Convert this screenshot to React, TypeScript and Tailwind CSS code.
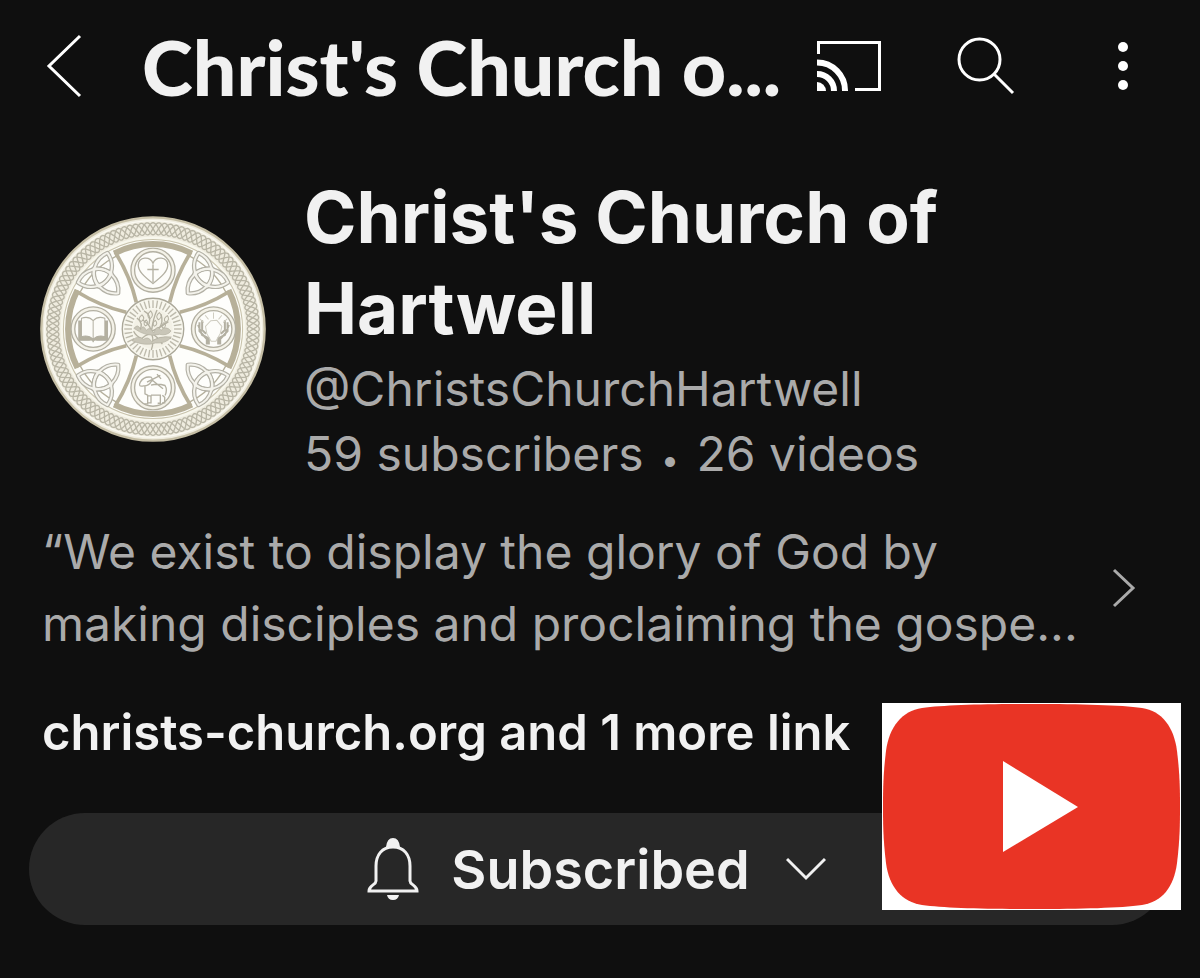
import React from "react";

const TAU = Math.PI * 2;

// One strand of the braided border, a sine wave wrapped around the emblem
const strand = (phase: number, waves: number) => {
  const points: string[] = [];
  for (let i = 0; i <= 720; i++) {
    const angle = (i / 720) * TAU;
    const radius = 300 + 18 * Math.sin(angle * waves + phase);
    points.push(
      `${(radius * Math.cos(angle)).toFixed(1)},${(radius * Math.sin(angle)).toFixed(1)}`
    );
  }
  return points.join(" ");
};

const strands = [0, TAU / 4, TAU / 2, (TAU * 3) / 4].map((p) => strand(p, 28));
const quarters = [0, 90, 180, 270];
const rays = Array.from({ length: 40 }, (_, i) => i * 9);

const knots = [
  { x: -155, y: -158, turn: 15 },
  { x: 155, y: -158, turn: -15 },
  { x: -155, y: 158, turn: 45 },
  { x: 155, y: 158, turn: -45 },
];

const Knot: React.FC<{ x: number; y: number; turn: number }> = ({ x, y, turn }) => {
  const lobes = [0, 120, 240].map((a) => (
    <path key={a} d="M0 -72A66 66 0 0 1 0 32A66 66 0 0 1 0 -72Z" transform={`rotate(${a})`} />
  ));

  return (
    <g transform={`translate(${x} ${y}) rotate(${turn})`} fill="none" strokeLinejoin="round">
      <g stroke="#b3b1a6" strokeWidth="13">{lobes}</g>
      <g stroke="#f4f3ec" strokeWidth="6">{lobes}</g>
    </g>
  );
};

const Medallion: React.FC<{ x: number; y: number; children: React.ReactNode }> = ({
  x,
  y,
  children,
}) => (
  <g transform={`translate(${x} ${y})`} fill="none" stroke="#b3b0a2" strokeWidth="3">
    <circle r="66" fill="#f4f2e8" strokeWidth="4" />
    <circle r="55" fill="#fdfdfa" strokeWidth="4" />
    {children}
  </g>
);

const Emblem: React.FC = () => (
  <svg viewBox="-338 -338 676 676" className="w-full" role="img" aria-label="Christ's Church of Hartwell">
    <circle r="334" fill="#efecdf" stroke="#c5bea5" strokeWidth="7" />
    <circle r="324" fill="none" stroke="#fbfaf3" strokeWidth="4" />
    <g fill="none" stroke="#b8b5a5" strokeWidth="4">
      {strands.map((points, i) => (
        <polyline key={i} points={points} />
      ))}
    </g>
    <circle r="272" fill="#fdfdf9" stroke="#f8f7ed" strokeWidth="10" />
    <circle r="268" fill="none" stroke="#c8c2ab" strokeWidth="3" />
    <circle r="244" fill="#fefefb" stroke="#b5b09d" strokeWidth="4" />

    {knots.map((knot) => (
      <Knot key={`${knot.x}${knot.y}`} {...knot} />
    ))}

    {quarters.map((a) => (
      <g key={a} transform={`rotate(${a})`} fill="none" stroke="#b7b099">
        <path d="M-113 -228Q-69 -157 -51 -80H51Q69 -157 113 -228A256 256 0 0 0 -113 -228Z" fill="#fefefc" stroke="none" />
        <path d="M-116 -226A254 254 0 0 1 116 -226" strokeWidth="18" />
        <path d="M-113 -230Q-68 -157 -50 -80M113 -230Q68 -157 50 -80" strokeWidth="11" />
      </g>
    ))}

    {/* Heart with cross */}
    <Medallion x={0} y={-176}>
      <path d="M0 40C-28 18 -45 2 -44 -16C-42 -40 -10 -43 0 -21C10 -43 42 -40 44 -16C45 2 28 18 0 40Z" strokeWidth="4" />
      <path d="M0 -17V36M-17 -2H17" strokeWidth="4" />
    </Medallion>

    {/* Open book */}
    <Medallion x={-179} y={0}>
      <path d="M-43 -24V34H-12Q0 30 0 40Q0 30 12 34H43V-24Z" fill="#b4b1a0" />
      <path d="M0 -25Q-14 -40 -35 -32V23Q-14 17 0 31Q14 17 35 23V-32Q14 -40 0 -25ZM0 -25V31" fill="#fcfcf8" />
    </Medallion>

    {/* Raised hands */}
    <Medallion x={181} y={0}>
      <path d="M-42 -20V6L-20 30V46M-46 -12L-34 18L-14 28V46M-34 -26V3L-22 14M42 -20V6L20 30V46M46 -12L34 18L14 28V46M34 -26V3L22 14" strokeWidth="6" />
      <path d="M-24 -8L-8 -25L10 -26L25 -8L20 14L7 37H-7L-20 14ZM0 -49V-31M-25 -41L-15 -29M25 -41L15 -29M-41 -30L-29 -19M41 -30L29 -19" stroke="#cfcdc1" />
    </Medallion>

    {/* Lamb */}
    <Medallion x={0} y={176}>
      <path d="M-28 -6Q-46 -2 -38 -17Q-28 -35 -6 -32Q2 -24 -6 -18Q-14 -5 -28 -6ZM-24 -4V18L-16 22V48H-26M-14 24H-6V45H-16M-6 22H22V46H14M28 22L35 28V45H27M-6 -8Q14 -14 36 -7Q44 6 36 23M-18 -17L22 -37M12 -41L24 -27M-2 -23L30 3" strokeWidth="4" />
    </Medallion>

    {/* Burning bush */}
    <circle r="92" fill="#f8f7ee" stroke="#aaa798" strokeWidth="4" />
    <g stroke="#bdbaac" strokeWidth="4">
      {rays.map((a) => (
        <path key={a} d="M0 -86V-63" transform={`rotate(${a})`} />
      ))}
    </g>
    <g fill="none" stroke="#b3b0a1" strokeWidth="4">
      <circle r="59" fill="#f3f1e6" stroke="none" />
      <path d="M-5 63Q4 35 -4 14Q-25 17 -38 34M-4 14Q13 22 28 45M-4 14Q-5 -12 -31 -27M-3 6Q21 -3 46 -22M-4 4Q0 -31 12 -57M-12 -14Q-4 -42 -27 -54M18 -2Q32 -20 24 -44M-32 30Q-51 22 -58 7M-40 4Q-27 -17 -48 -33M2 34Q30 20 54 28" />
      <path d="M-63 35Q-45 16 -28 31Q-14 20 -4 38Q17 20 55 24Q39 44 7 42Q-24 52 -63 35ZM-57 -2Q-45 -18 -37 2Q-30 -16 -20 4Q-9 -10 2 12Q12 -17 24 4Q38 -12 54 6Q43 21 19 16Q-19 26 -57 -2Z" fill="#c9c6b8" strokeWidth="2" />
      <path d="M-36 -22q-12 -9 3 -20q12 12 -3 20M-10 -30q-12 -11 3 -24q12 14 -3 24M16 -27q-11 -11 3 -22q13 11 -3 22M38 -20q-10 -11 5 -20q9 12 -5 20M-23 -9q-9 -10 3 -18q10 11 -3 18M4 -8q-9 -10 3 -18q10 11 -3 18M30 -2q-8 -9 3 -17q10 10 -3 17" strokeWidth="3" />
    </g>
  </svg>
);

const Header: React.FC = () => (
  <header className="flex h-[132px] items-center pr-[57px] pl-[46px] text-white">
    <button type="button" aria-label="Back" className="shrink-0">
      <svg viewBox="0 0 36 64" className="w-9" fill="none" stroke="currentColor" strokeWidth="3">
        <path d="M34 2L3 32L34 62" />
      </svg>
    </button>
    <p className="ml-[60px] flex-1 font-[Lato,sans-serif] text-[77px] leading-[100px] font-black whitespace-nowrap text-[#f1f1f1]">
      Christ&apos;s Church o...
    </p>
    <div className="flex shrink-0 items-center">
      <button type="button" aria-label="Cast" className="mr-[76px]">
        <svg viewBox="0 0 64 50" className="w-16" fill="none" stroke="currentColor">
          <path d="M1.5 13V1.5H62.5V48.5H38" strokeWidth="3" />
          <path d="M0 21.5A28 28 0 0 1 28 50M0 33A17 17 0 0 1 17 50" strokeWidth="6" />
          <path d="M0 41A9 9 0 0 1 9 50H0Z" fill="currentColor" stroke="none" />
        </svg>
      </button>
      <button type="button" aria-label="Search" className="mr-[88px]">
        <svg viewBox="0 0 58 58" className="w-[58px]" fill="none" stroke="currentColor" strokeWidth="3">
          <circle cx="22.5" cy="22.5" r="20.5" />
          <path d="M37 37L56 56" />
        </svg>
      </button>
      <button type="button" aria-label="More options">
        <svg viewBox="0 0 40 50" className="w-10" fill="currentColor">
          <circle cx="20" cy="6" r="5" />
          <circle cx="20" cy="25" r="5" />
          <circle cx="20" cy="44" r="5" />
        </svg>
      </button>
    </div>
  </header>
);

const Profile: React.FC = () => (
  <section className="flex items-center gap-[38px] pt-10 pr-10 pl-10">
    <div className="w-[226px] shrink-0">
      <Emblem />
    </div>
    <div className="whitespace-nowrap">
      <h1 className="text-[71px] leading-[91px] font-bold">
        Christ&apos;s Church of
        <br />
        Hartwell
      </h1>
      <div className="pt-[2px] text-[48px] leading-[65px] text-[#aaaaaa]">
        <p>@ChristsChurchHartwell</p>
        <p>
          59 subscribers <span className="mx-1 text-[32px] leading-none">•</span> 26 videos
        </p>
      </div>
    </div>
  </section>
);

const Description: React.FC = () => (
  <button
    type="button"
    className="mt-[30px] flex w-full items-center justify-between pr-16 pl-[42px] text-left text-[48px] leading-[72px] whitespace-nowrap text-[#aaaaaa]"
  >
    <span>
      “We exist to display the glory of God by
      <br />
      making disciples and proclaiming the gospe...
    </span>
    <svg viewBox="0 0 24 40" className="w-6 shrink-0" fill="none" stroke="currentColor" strokeWidth="3">
      <path d="M2 2L21 20L2 38" />
    </svg>
  </button>
);

const Actions: React.FC = () => (
  <section className="relative mt-[37px] pr-8 pl-[29px]">
    <a href="#links" className="ml-[13px] text-[49px] leading-[72px] font-semibold whitespace-nowrap">
      christs-church.org and 1 more link
    </a>
    <button
      type="button"
      className="mt-11 flex h-28 w-full items-center justify-center gap-8 rounded-full bg-[#272727] pr-1 text-[54px] font-semibold"
    >
      <svg viewBox="0 0 52 64" className="w-[52px]" fill="none" stroke="currentColor" strokeWidth="3">
        <path d="M26 10C15 10 9 18 9 29V44C9 48 2 48 2 54H50C50 48 43 48 43 44V29C43 18 37 10 26 10Z" />
        <path d="M19 10Q20 1 26 1Q32 1 33 10ZM20 58H32Q31 63 26 63Q21 63 20 58Z" fill="currentColor" stroke="none" />
      </svg>
      Subscribed
      <svg viewBox="0 0 40 24" className="ml-1 w-10" fill="none" stroke="currentColor" strokeWidth="3">
        <path d="M1 2L20 21L39 2" />
      </svg>
    </button>
    <svg viewBox="0 0 299 207" className="absolute right-[19px] bottom-[15px] w-[299px]" role="img" aria-label="YouTube">
      <path d="M0 0H299V207H0Z" fill="#fff" />
      <path
        d="M150 1C200 1 238 2 260 5C280 8 292 24 295 48C298 72 298 90 298 104C298 118 298 136 295 160C292 184 280 199 260 202C238 205 200 206 150 206C100 206 62 205 40 202C20 199 7 184 4 160C1 136 1 118 1 104C1 90 1 72 4 48C7 24 20 8 40 5C62 2 100 1 150 1Z"
        fill="#e93425"
      />
      <path d="M121 58V149L196 104Z" fill="#fff" />
    </svg>
  </section>
);

const App: React.FC = () => {
  return (
    <main className="min-h-screen overflow-hidden bg-[#0f0f0f] pb-8 font-[Inter,sans-serif] text-[#f1f1f1]">
      <Header />
      <Profile />
      <Description />
      <Actions />
    </main>
  );
};

export default App;
